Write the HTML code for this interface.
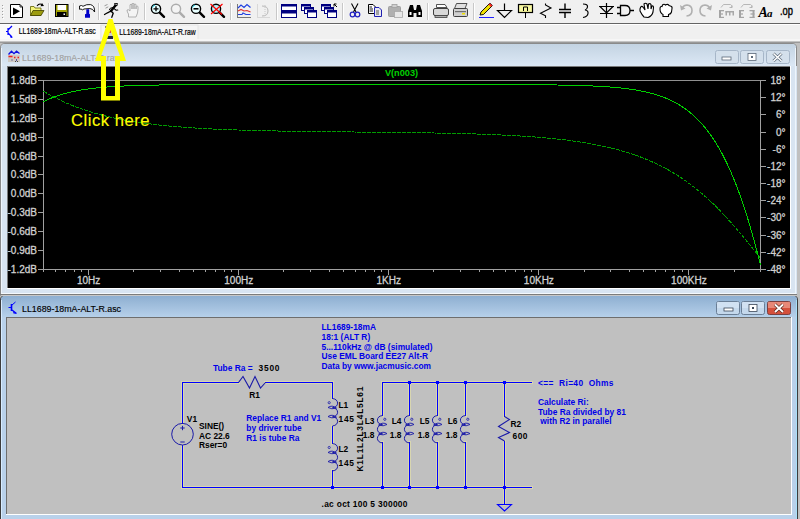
<!DOCTYPE html>
<html><head><meta charset="utf-8"><style>
html,body{margin:0;padding:0;background:#c0c0c0;}
#root{position:relative;width:800px;height:519px;overflow:hidden;background:#c0c0c0;font-family:"Liberation Sans", sans-serif;}
svg{position:absolute;left:0;top:0;}
</style></head><body><div id="root">
<svg width="800" height="519" viewBox="0 0 800 519" font-family='"Liberation Sans", sans-serif'>
<defs>
<linearGradient id="gInact" x1="0" y1="0" x2="0" y2="1">
<stop offset="0" stop-color="#c3d3e2"/><stop offset="1" stop-color="#dce8f5"/></linearGradient>
<linearGradient id="gAct" x1="0" y1="0" x2="0" y2="1">
<stop offset="0" stop-color="#8eafd1"/><stop offset="1" stop-color="#b6d0ea"/></linearGradient>
</defs>
<rect x="0" y="0" width="800" height="23" fill="#f0f0f0"/><rect x="0" y="23" width="800" height="1" fill="#646464"/><rect x="2" y="5" width="1" height="1" fill="#a0a0a0"/><rect x="3" y="6" width="1" height="1" fill="#ffffff"/><rect x="2" y="8" width="1" height="1" fill="#a0a0a0"/><rect x="3" y="9" width="1" height="1" fill="#ffffff"/><rect x="2" y="11" width="1" height="1" fill="#a0a0a0"/><rect x="3" y="12" width="1" height="1" fill="#ffffff"/><rect x="2" y="14" width="1" height="1" fill="#a0a0a0"/><rect x="3" y="15" width="1" height="1" fill="#ffffff"/><rect x="2" y="17" width="1" height="1" fill="#a0a0a0"/><rect x="3" y="18" width="1" height="1" fill="#ffffff"/><rect x="48" y="3" width="1" height="17" fill="#c8c8c8"/><rect x="49" y="3" width="1" height="17" fill="#ffffff"/><rect x="73" y="3" width="1" height="17" fill="#c8c8c8"/><rect x="74" y="3" width="1" height="17" fill="#ffffff"/><rect x="98" y="3" width="1" height="17" fill="#c8c8c8"/><rect x="99" y="3" width="1" height="17" fill="#ffffff"/><rect x="144" y="3" width="1" height="17" fill="#c8c8c8"/><rect x="145" y="3" width="1" height="17" fill="#ffffff"/><rect x="230" y="3" width="1" height="17" fill="#c8c8c8"/><rect x="231" y="3" width="1" height="17" fill="#ffffff"/><rect x="276" y="3" width="1" height="17" fill="#c8c8c8"/><rect x="277" y="3" width="1" height="17" fill="#ffffff"/><rect x="342" y="3" width="1" height="17" fill="#c8c8c8"/><rect x="343" y="3" width="1" height="17" fill="#ffffff"/><rect x="427" y="3" width="1" height="17" fill="#c8c8c8"/><rect x="428" y="3" width="1" height="17" fill="#ffffff"/><rect x="473" y="3" width="1" height="17" fill="#c8c8c8"/><rect x="474" y="3" width="1" height="17" fill="#ffffff"/><rect x="0" y="24" width="800" height="17" fill="#f0f0f0"/><rect x="0" y="24" width="800" height="1" fill="#ffffff"/><rect x="0" y="25" width="100" height="14" fill="#fafafa"/><rect x="101" y="25" width="97" height="15" fill="#f5f5f5" stroke="#e4e4e4" stroke-width="1"/><rect x="0" y="39" width="800" height="2" fill="#f6f6f6"/><rect x="0" y="41" width="800" height="1" fill="#c4c4c4"/><rect x="0" y="42" width="800" height="1" fill="#9a9a9a"/>
<path d="M0.5,295.5 L0.5,48 Q0.5,43.5 5,43.5 L792,43.5 Q796.5,43.5 796.5,48 L796.5,295.5 Z" fill="#d8e4f1" stroke="#8a8a8a" stroke-width="1"/><path d="M1,66 L1,48 Q1,44 5,44 L792,44 Q796,44 796,48 L796,66 Z" fill="url(#gInact)"/><rect x="1" y="66" width="796" height="229" fill="#d8e4f1"/><rect x="795" y="48" width="1" height="247" fill="#eef5fc"/><rect x="1" y="48" width="1" height="247" fill="#eef5fc"/><rect x="7" y="66" width="784" height="223" fill="#ffffff"/><rect x="7" y="66" width="783" height="222" fill="#7a7a7a"/><rect x="8" y="67" width="782" height="221" fill="#000000"/><rect x="1" y="293" width="795" height="1" fill="#f4f8fc"/><rect x="0" y="294" width="797" height="1" fill="#7c7c7c"/><rect x="8" y="55" width="12" height="7" fill="#cfcac4"/><polyline points="8.5,54.5 11.5,51.2 14,53.6 16.5,51.2 19.5,53.6" fill="none" stroke="#1010e0" stroke-width="1.3"/><path d="M8.5,56.5 L12.5,56.5 M14,57.5 L15.5,57.5 M17.5,57.5 L19,57.5" stroke="#f02020" stroke-width="1.3"/><rect x="11.5" y="59" width="1" height="2" fill="#7070a0"/><rect x="16" y="59" width="1" height="2" fill="#5050a0"/><rect x="15" y="61" width="1" height="1" fill="#404040"/><rect x="17" y="61" width="1" height="1" fill="#404040"/><text x="22" y="60.8" font-size="9.6" fill="#a0a0a0" stroke="#a0a0a0" stroke-width="0.15" textLength="99" lengthAdjust="spacingAndGlyphs">LL1689-18mA-ALT-R.raw</text><rect x="715.5" y="50.5" width="23" height="13" rx="2" fill="#d4e0ec" stroke="#a6b6c8" stroke-width="1"/><rect x="740.5" y="50.5" width="23" height="13" rx="2" fill="#d4e0ec" stroke="#a6b6c8" stroke-width="1"/><rect x="766.5" y="50.5" width="23" height="13" rx="2" fill="#d4e0ec" stroke="#a6b6c8" stroke-width="1"/><rect x="722" y="57" width="9" height="3" fill="#fff" stroke="#5a6878" stroke-width="0.8"/><rect x="748" y="53.5" width="8" height="7" fill="#fff" stroke="#5a6878" stroke-width="0.8"/><rect x="751" y="56" width="2" height="2" fill="#5a6878"/><path d="M773.5,53.5 L781.5,61 M781.5,53.5 L773.5,61" stroke="#5a6878" stroke-width="3"/><path d="M773.5,53.5 L781.5,61 M781.5,53.5 L773.5,61" stroke="#fff" stroke-width="1.6"/><rect x="38" y="80" width="728" height="1" fill="#909090"/><rect x="38" y="269" width="728" height="1" fill="#a0a0a0"/><rect x="43" y="80" width="1" height="190" fill="#a0a0a0"/><rect x="760" y="80" width="1" height="190" fill="#a0a0a0"/><rect x="38" y="80" width="5" height="1" fill="#a0a0a0"/><text x="37" y="83.5" font-size="10" fill="#d0d0d0" stroke="#d0d0d0" stroke-width="0.3" text-anchor="end">1.8dB</text><rect x="38" y="99" width="5" height="1" fill="#a0a0a0"/><text x="37" y="102.5" font-size="10" fill="#d0d0d0" stroke="#d0d0d0" stroke-width="0.3" text-anchor="end">1.5dB</text><rect x="38" y="118" width="5" height="1" fill="#a0a0a0"/><text x="37" y="121.5" font-size="10" fill="#d0d0d0" stroke="#d0d0d0" stroke-width="0.3" text-anchor="end">1.2dB</text><rect x="38" y="137" width="5" height="1" fill="#a0a0a0"/><text x="37" y="140.5" font-size="10" fill="#d0d0d0" stroke="#d0d0d0" stroke-width="0.3" text-anchor="end">0.9dB</text><rect x="38" y="156" width="5" height="1" fill="#a0a0a0"/><text x="37" y="159.5" font-size="10" fill="#d0d0d0" stroke="#d0d0d0" stroke-width="0.3" text-anchor="end">0.6dB</text><rect x="38" y="174" width="5" height="1" fill="#a0a0a0"/><text x="37" y="177.5" font-size="10" fill="#d0d0d0" stroke="#d0d0d0" stroke-width="0.3" text-anchor="end">0.3dB</text><rect x="38" y="193" width="5" height="1" fill="#a0a0a0"/><text x="37" y="196.5" font-size="10" fill="#d0d0d0" stroke="#d0d0d0" stroke-width="0.3" text-anchor="end">0.0dB</text><rect x="38" y="212" width="5" height="1" fill="#a0a0a0"/><text x="37" y="215.5" font-size="10" fill="#d0d0d0" stroke="#d0d0d0" stroke-width="0.3" text-anchor="end">-0.3dB</text><rect x="38" y="231" width="5" height="1" fill="#a0a0a0"/><text x="37" y="234.5" font-size="10" fill="#d0d0d0" stroke="#d0d0d0" stroke-width="0.3" text-anchor="end">-0.6dB</text><rect x="38" y="250" width="5" height="1" fill="#a0a0a0"/><text x="37" y="253.5" font-size="10" fill="#d0d0d0" stroke="#d0d0d0" stroke-width="0.3" text-anchor="end">-0.9dB</text><rect x="38" y="269" width="5" height="1" fill="#a0a0a0"/><text x="37" y="272.5" font-size="10" fill="#d0d0d0" stroke="#d0d0d0" stroke-width="0.3" text-anchor="end">-1.2dB</text><rect x="761" y="80" width="5" height="1" fill="#a0a0a0"/><text x="785.5" y="83.5" font-size="10" fill="#d0d0d0" stroke="#d0d0d0" stroke-width="0.3" text-anchor="end">18°</text><rect x="761" y="97" width="5" height="1" fill="#a0a0a0"/><text x="785.5" y="100.5" font-size="10" fill="#d0d0d0" stroke="#d0d0d0" stroke-width="0.3" text-anchor="end">12°</text><rect x="761" y="114" width="5" height="1" fill="#a0a0a0"/><text x="785.5" y="117.5" font-size="10" fill="#d0d0d0" stroke="#d0d0d0" stroke-width="0.3" text-anchor="end">6°</text><rect x="761" y="132" width="5" height="1" fill="#a0a0a0"/><text x="785.5" y="135.5" font-size="10" fill="#d0d0d0" stroke="#d0d0d0" stroke-width="0.3" text-anchor="end">0°</text><rect x="761" y="149" width="5" height="1" fill="#a0a0a0"/><text x="785.5" y="152.5" font-size="10" fill="#d0d0d0" stroke="#d0d0d0" stroke-width="0.3" text-anchor="end">-6°</text><rect x="761" y="166" width="5" height="1" fill="#a0a0a0"/><text x="785.5" y="169.5" font-size="10" fill="#d0d0d0" stroke="#d0d0d0" stroke-width="0.3" text-anchor="end">-12°</text><rect x="761" y="183" width="5" height="1" fill="#a0a0a0"/><text x="785.5" y="186.5" font-size="10" fill="#d0d0d0" stroke="#d0d0d0" stroke-width="0.3" text-anchor="end">-18°</text><rect x="761" y="200" width="5" height="1" fill="#a0a0a0"/><text x="785.5" y="203.5" font-size="10" fill="#d0d0d0" stroke="#d0d0d0" stroke-width="0.3" text-anchor="end">-24°</text><rect x="761" y="217" width="5" height="1" fill="#a0a0a0"/><text x="785.5" y="220.5" font-size="10" fill="#d0d0d0" stroke="#d0d0d0" stroke-width="0.3" text-anchor="end">-30°</text><rect x="761" y="235" width="5" height="1" fill="#a0a0a0"/><text x="785.5" y="238.5" font-size="10" fill="#d0d0d0" stroke="#d0d0d0" stroke-width="0.3" text-anchor="end">-36°</text><rect x="761" y="252" width="5" height="1" fill="#a0a0a0"/><text x="785.5" y="255.5" font-size="10" fill="#d0d0d0" stroke="#d0d0d0" stroke-width="0.3" text-anchor="end">-42°</text><rect x="761" y="269" width="5" height="1" fill="#a0a0a0"/><text x="785.5" y="272.5" font-size="10" fill="#d0d0d0" stroke="#d0d0d0" stroke-width="0.3" text-anchor="end">-48°</text><rect x="43" y="270" width="1" height="2" fill="#a0a0a0"/><rect x="55" y="270" width="1" height="2" fill="#a0a0a0"/><rect x="65" y="270" width="1" height="2" fill="#a0a0a0"/><rect x="74" y="270" width="1" height="2" fill="#a0a0a0"/><rect x="81" y="270" width="1" height="2" fill="#a0a0a0"/><rect x="88" y="270" width="1" height="5" fill="#a0a0a0"/><rect x="133" y="270" width="1" height="2" fill="#a0a0a0"/><rect x="160" y="270" width="1" height="2" fill="#a0a0a0"/><rect x="179" y="270" width="1" height="2" fill="#a0a0a0"/><rect x="193" y="270" width="1" height="2" fill="#a0a0a0"/><rect x="205" y="270" width="1" height="2" fill="#a0a0a0"/><rect x="215" y="270" width="1" height="2" fill="#a0a0a0"/><rect x="224" y="270" width="1" height="2" fill="#a0a0a0"/><rect x="231" y="270" width="1" height="2" fill="#a0a0a0"/><rect x="238" y="270" width="1" height="5" fill="#a0a0a0"/><rect x="283" y="270" width="1" height="2" fill="#a0a0a0"/><rect x="310" y="270" width="1" height="2" fill="#a0a0a0"/><rect x="329" y="270" width="1" height="2" fill="#a0a0a0"/><rect x="343" y="270" width="1" height="2" fill="#a0a0a0"/><rect x="355" y="270" width="1" height="2" fill="#a0a0a0"/><rect x="365" y="270" width="1" height="2" fill="#a0a0a0"/><rect x="374" y="270" width="1" height="2" fill="#a0a0a0"/><rect x="381" y="270" width="1" height="2" fill="#a0a0a0"/><rect x="388" y="270" width="1" height="5" fill="#a0a0a0"/><rect x="433" y="270" width="1" height="2" fill="#a0a0a0"/><rect x="460" y="270" width="1" height="2" fill="#a0a0a0"/><rect x="479" y="270" width="1" height="2" fill="#a0a0a0"/><rect x="493" y="270" width="1" height="2" fill="#a0a0a0"/><rect x="505" y="270" width="1" height="2" fill="#a0a0a0"/><rect x="515" y="270" width="1" height="2" fill="#a0a0a0"/><rect x="524" y="270" width="1" height="2" fill="#a0a0a0"/><rect x="531" y="270" width="1" height="2" fill="#a0a0a0"/><rect x="538" y="270" width="1" height="5" fill="#a0a0a0"/><rect x="584" y="270" width="1" height="2" fill="#a0a0a0"/><rect x="610" y="270" width="1" height="2" fill="#a0a0a0"/><rect x="629" y="270" width="1" height="2" fill="#a0a0a0"/><rect x="643" y="270" width="1" height="2" fill="#a0a0a0"/><rect x="655" y="270" width="1" height="2" fill="#a0a0a0"/><rect x="665" y="270" width="1" height="2" fill="#a0a0a0"/><rect x="674" y="270" width="1" height="2" fill="#a0a0a0"/><rect x="682" y="270" width="1" height="2" fill="#a0a0a0"/><rect x="688" y="270" width="1" height="5" fill="#a0a0a0"/><rect x="734" y="270" width="1" height="2" fill="#a0a0a0"/><rect x="760" y="270" width="1" height="2" fill="#a0a0a0"/><text x="88.67256114933701" y="284.4" font-size="10" fill="#d0d0d0" stroke="#d0d0d0" stroke-width="0.3" text-anchor="middle">10Hz</text><text x="238.73256114933702" y="284.4" font-size="10" fill="#d0d0d0" stroke="#d0d0d0" stroke-width="0.3" text-anchor="middle">100Hz</text><text x="388.792561149337" y="284.4" font-size="10" fill="#d0d0d0" stroke="#d0d0d0" stroke-width="0.3" text-anchor="middle">1KHz</text><text x="538.852561149337" y="284.4" font-size="10" fill="#d0d0d0" stroke="#d0d0d0" stroke-width="0.3" text-anchor="middle">10KHz</text><text x="688.9125611493371" y="284.4" font-size="10" fill="#d0d0d0" stroke="#d0d0d0" stroke-width="0.3" text-anchor="middle">100KHz</text><text x="401.5" y="75.8" font-size="9.2" font-weight="bold" fill="#00d000" text-anchor="middle">V(n003)</text><polyline points="43.50,91.24 44.69,91.95 45.89,92.65 47.08,93.34 48.28,94.02 49.47,94.68 50.67,95.34 51.86,95.99 53.06,96.62 54.25,97.24 55.45,97.86 56.64,98.46 57.84,99.06 59.03,99.64 60.23,100.21 61.42,100.78 62.62,101.33 63.81,101.88 65.01,102.42 66.20,102.94 67.40,103.46 68.59,103.97 69.79,104.47 70.98,104.96 72.18,105.45 73.37,105.92 74.57,106.39 75.76,106.85 76.96,107.30 78.15,107.74 79.35,108.18 80.54,108.61 81.74,109.03 82.93,109.44 84.13,109.84 85.32,110.24 86.52,110.64 87.71,111.02 88.91,111.40 90.10,111.77 91.30,112.13 92.49,112.49 93.69,112.85 94.88,113.19 96.08,113.53 97.27,113.86 98.47,114.19 99.66,114.51 100.86,114.83 102.05,115.14 103.25,115.45 104.44,115.75 105.64,116.04 106.83,116.33 108.03,116.61 109.22,116.89 110.42,117.17 111.61,117.44 112.81,117.70 114.00,117.96 115.20,118.22 116.39,118.47 117.59,118.71 118.78,118.95 119.98,119.19 121.17,119.42 122.37,119.65 123.56,119.88 124.76,120.10 125.95,120.31 127.15,120.53 128.34,120.74 129.54,120.94 130.73,121.14 131.93,121.34 133.12,121.54 134.32,121.73 135.51,121.91 136.71,122.10 137.90,122.28 139.10,122.46 140.29,122.63 141.49,122.80 142.68,122.97 143.88,123.13 145.07,123.30 146.27,123.46 147.46,123.61 148.66,123.76 149.85,123.92 151.05,124.06 152.24,124.21 153.44,124.35 154.63,124.49 155.83,124.63 157.02,124.76 158.22,124.90 159.41,125.03 160.61,125.16 161.80,125.28 163.00,125.40 164.19,125.53 165.39,125.64 166.58,125.76 167.78,125.88 168.97,125.99 170.17,126.10 171.36,126.21 172.56,126.31 173.75,126.42 174.95,126.52 176.14,126.62 177.34,126.72 178.53,126.82 179.73,126.92 180.92,127.01 182.12,127.10 183.31,127.19 184.51,127.28 185.70,127.37 186.90,127.45 188.09,127.54 189.29,127.62 190.48,127.70 191.68,127.78 192.87,127.86 194.07,127.94 195.26,128.01 196.46,128.09 197.65,128.16 198.85,128.23 200.04,128.30 201.24,128.37 202.43,128.44 203.63,128.51 204.82,128.57 206.02,128.63 207.21,128.70 208.41,128.76 209.60,128.82 210.80,128.88 211.99,128.94 213.19,129.00 214.38,129.05 215.58,129.11 216.77,129.16 217.97,129.22 219.16,129.27 220.36,129.32 221.55,129.37 222.75,129.42 223.94,129.47 225.14,129.52 226.33,129.57 227.53,129.61 228.72,129.66 229.92,129.71 231.11,129.75 232.31,129.79 233.50,129.84 234.70,129.88 235.89,129.92 237.09,129.96 238.28,130.00 239.48,130.04 240.67,130.08 241.87,130.11 243.06,130.15 244.26,130.19 245.45,130.22 246.65,130.26 247.84,130.29 249.04,130.33 250.23,130.36 251.43,130.39 252.62,130.43 253.82,130.46 255.01,130.49 256.21,130.52 257.40,130.55 258.60,130.58 259.79,130.61 260.99,130.64 262.18,130.67 263.38,130.69 264.57,130.72 265.77,130.75 266.96,130.78 268.16,130.80 269.35,130.83 270.55,130.85 271.74,130.88 272.94,130.90 274.13,130.93 275.33,130.95 276.52,130.97 277.72,131.00 278.91,131.02 280.11,131.04 281.30,131.06 282.50,131.08 283.69,131.11 284.89,131.13 286.08,131.15 287.28,131.17 288.47,131.19 289.67,131.21 290.86,131.23 292.06,131.25 293.25,131.26 294.45,131.28 295.64,131.30 296.84,131.32 298.03,131.34 299.23,131.36 300.42,131.37 301.62,131.39 302.81,131.41 304.01,131.42 305.20,131.44 306.40,131.46 307.59,131.47 308.79,131.49 309.98,131.50 311.18,131.52 312.37,131.54 313.56,131.55 314.76,131.57 315.95,131.58 317.15,131.60 318.34,131.61 319.54,131.62 320.73,131.64 321.93,131.65 323.12,131.67 324.32,131.68 325.51,131.70 326.71,131.71 327.90,131.72 329.10,131.74 330.29,131.75 331.49,131.76 332.68,131.78 333.88,131.79 335.07,131.80 336.27,131.81 337.46,131.83 338.66,131.84 339.85,131.85 341.05,131.87 342.24,131.88 343.44,131.89 344.63,131.90 345.83,131.92 347.02,131.93 348.22,131.94 349.41,131.95 350.61,131.97 351.80,131.98 353.00,131.99 354.19,132.00 355.39,132.01 356.58,132.03 357.78,132.04 358.97,132.05 360.17,132.06 361.36,132.07 362.56,132.09 363.75,132.10 364.95,132.11 366.14,132.12 367.34,132.14 368.53,132.15 369.73,132.16 370.92,132.17 372.12,132.19 373.31,132.20 374.51,132.21 375.70,132.22 376.90,132.24 378.09,132.25 379.29,132.26 380.48,132.27 381.68,132.29 382.87,132.30 384.07,132.31 385.26,132.33 386.46,132.34 387.65,132.35 388.85,132.37 390.04,132.38 391.24,132.39 392.43,132.41 393.63,132.42 394.82,132.44 396.02,132.45 397.21,132.46 398.41,132.48 399.60,132.49 400.80,132.51 401.99,132.52 403.19,132.54 404.38,132.55 405.58,132.57 406.77,132.58 407.97,132.60 409.16,132.62 410.36,132.63 411.55,132.65 412.75,132.66 413.94,132.68 415.14,132.70 416.33,132.72 417.53,132.73 418.72,132.75 419.92,132.77 421.11,132.79 422.31,132.81 423.50,132.82 424.70,132.84 425.89,132.86 427.09,132.88 428.28,132.90 429.48,132.92 430.67,132.94 431.87,132.96 433.06,132.98 434.26,133.00 435.45,133.03 436.65,133.05 437.84,133.07 439.04,133.09 440.23,133.12 441.43,133.14 442.62,133.16 443.82,133.19 445.01,133.21 446.21,133.24 447.40,133.26 448.60,133.29 449.79,133.31 450.99,133.34 452.18,133.37 453.38,133.39 454.57,133.42 455.77,133.45 456.96,133.48 458.16,133.51 459.35,133.54 460.55,133.57 461.74,133.60 462.94,133.63 464.13,133.66 465.33,133.69 466.52,133.73 467.72,133.76 468.91,133.79 470.11,133.83 471.30,133.86 472.50,133.90 473.69,133.94 474.89,133.97 476.08,134.01 477.28,134.05 478.47,134.09 479.67,134.13 480.86,134.17 482.06,134.21 483.25,134.25 484.45,134.29 485.64,134.34 486.84,134.38 488.03,134.43 489.23,134.47 490.42,134.52 491.62,134.57 492.81,134.61 494.01,134.66 495.20,134.71 496.40,134.76 497.59,134.82 498.79,134.87 499.98,134.92 501.18,134.98 502.37,135.03 503.57,135.09 504.76,135.15 505.96,135.20 507.15,135.26 508.35,135.33 509.54,135.39 510.74,135.45 511.93,135.51 513.13,135.58 514.32,135.65 515.52,135.71 516.71,135.78 517.91,135.85 519.10,135.92 520.30,136.00 521.49,136.07 522.69,136.15 523.88,136.22 525.08,136.30 526.27,136.38 527.47,136.46 528.66,136.55 529.86,136.63 531.05,136.72 532.25,136.80 533.44,136.89 534.64,136.98 535.83,137.07 537.03,137.17 538.22,137.26 539.42,137.36 540.61,137.46 541.81,137.56 543.00,137.66 544.20,137.77 545.39,137.87 546.59,137.98 547.78,138.09 548.98,138.21 550.17,138.32 551.37,138.44 552.56,138.56 553.76,138.68 554.95,138.80 556.15,138.93 557.34,139.05 558.54,139.18 559.73,139.32 560.93,139.45 562.12,139.59 563.32,139.73 564.51,139.87 565.71,140.02 566.90,140.16 568.10,140.31 569.29,140.47 570.49,140.62 571.68,140.78 572.88,140.94 574.07,141.11 575.27,141.28 576.46,141.45 577.66,141.62 578.85,141.80 580.05,141.98 581.24,142.16 582.43,142.35 583.63,142.54 584.82,142.74 586.02,142.93 587.21,143.13 588.41,143.34 589.60,143.55 590.80,143.76 591.99,143.98 593.19,144.20 594.38,144.42 595.58,144.65 596.77,144.88 597.97,145.12 599.16,145.36 600.36,145.61 601.55,145.86 602.75,146.11 603.94,146.37 605.14,146.63 606.33,146.90 607.53,147.18 608.72,147.46 609.92,147.74 611.11,148.03 612.31,148.32 613.50,148.62 614.70,148.93 615.89,149.24 617.09,149.55 618.28,149.87 619.48,150.20 620.67,150.54 621.87,150.87 623.06,151.22 624.26,151.57 625.45,151.93 626.65,152.29 627.84,152.67 629.04,153.04 630.23,153.43 631.43,153.82 632.62,154.22 633.82,154.62 635.01,155.04 636.21,155.46 637.40,155.88 638.60,156.32 639.79,156.76 640.99,157.21 642.18,157.67 643.38,158.14 644.57,158.61 645.77,159.09 646.96,159.58 648.16,160.08 649.35,160.59 650.55,161.11 651.74,161.64 652.94,162.17 654.13,162.72 655.33,163.27 656.52,163.84 657.72,164.41 658.91,164.99 660.11,165.59 661.30,166.19 662.50,166.80 663.69,167.43 664.89,168.06 666.08,168.70 667.28,169.36 668.47,170.03 669.67,170.70 670.86,171.39 672.06,172.09 673.25,172.80 674.45,173.53 675.64,174.26 676.84,175.01 678.03,175.77 679.23,176.54 680.42,177.32 681.62,178.11 682.81,178.92 684.01,179.74 685.20,180.57 686.40,181.42 687.59,182.28 688.79,183.15 689.98,184.03 691.18,184.93 692.37,185.84 693.57,186.76 694.76,187.70 695.96,188.65 697.15,189.62 698.35,190.60 699.54,191.59 700.74,192.59 701.93,193.61 703.13,194.64 704.32,195.69 705.52,196.75 706.71,197.83 707.91,198.91 709.10,200.02 710.30,201.13 711.49,202.26 712.69,203.40 713.88,204.56 715.08,205.73 716.27,206.91 717.47,208.11 718.66,209.32 719.86,210.54 721.05,211.78 722.25,213.03 723.44,214.29 724.64,215.56 725.83,216.85 727.03,218.15 728.22,219.46 729.42,220.78 730.61,222.11 731.81,223.46 733.00,224.81 734.20,226.18 735.39,227.56 736.59,228.94 737.78,230.34 738.98,231.75 740.17,233.16 741.37,234.58 742.56,236.01 743.76,237.45 744.95,238.90 746.15,240.35 747.34,241.82 748.54,243.28 749.73,244.75 750.93,246.23 752.12,247.72 753.32,249.20 754.51,250.69 755.71,252.19 756.90,253.68 758.10,255.18 759.29,256.69 760.49,258.19" fill="none" stroke="#009c00" stroke-width="1" stroke-dasharray="4,1" shape-rendering="crispEdges"/><polyline points="43.50,101.61 44.69,101.01 45.89,100.43 47.08,99.87 48.28,99.33 49.47,98.81 50.67,98.31 51.86,97.83 53.06,97.36 54.25,96.90 55.45,96.47 56.64,96.05 57.84,95.64 59.03,95.25 60.23,94.87 61.42,94.50 62.62,94.15 63.81,93.80 65.01,93.47 66.20,93.16 67.40,92.85 68.59,92.55 69.79,92.27 70.98,91.99 72.18,91.72 73.37,91.47 74.57,91.22 75.76,90.98 76.96,90.75 78.15,90.53 79.35,90.31 80.54,90.11 81.74,89.91 82.93,89.71 84.13,89.53 85.32,89.35 86.52,89.17 87.71,89.01 88.91,88.85 90.10,88.69 91.30,88.54 92.49,88.40 93.69,88.26 94.88,88.12 96.08,87.99 97.27,87.87 98.47,87.75 99.66,87.63 100.86,87.52 102.05,87.41 103.25,87.31 104.44,87.21 105.64,87.11 106.83,87.02 108.03,86.93 109.22,86.84 110.42,86.76 111.61,86.67 112.81,86.60 114.00,86.52 115.20,86.45 116.39,86.38 117.59,86.31 118.78,86.25 119.98,86.18 121.17,86.12 122.37,86.07 123.56,86.01 124.76,85.95 125.95,85.90 127.15,85.85 128.34,85.80 129.54,85.76 130.73,85.71 131.93,85.67 133.12,85.63 134.32,85.59 135.51,85.55 136.71,85.51 137.90,85.47 139.10,85.44 140.29,85.40 141.49,85.37 142.68,85.34 143.88,85.31 145.07,85.28 146.27,85.25 147.46,85.23 148.66,85.20 149.85,85.17 151.05,85.15 152.24,85.13 153.44,85.10 154.63,85.08 155.83,85.06 157.02,85.04 158.22,85.02 159.41,85.00 160.61,84.99 161.80,84.97 163.00,84.95 164.19,84.93 165.39,84.92 166.58,84.90 167.78,84.89 168.97,84.88 170.17,84.86 171.36,84.85 172.56,84.84 173.75,84.82 174.95,84.81 176.14,84.80 177.34,84.79 178.53,84.78 179.73,84.77 180.92,84.76 182.12,84.75 183.31,84.74 184.51,84.73 185.70,84.73 186.90,84.72 188.09,84.71 189.29,84.70 190.48,84.69 191.68,84.69 192.87,84.68 194.07,84.67 195.26,84.67 196.46,84.66 197.65,84.66 198.85,84.65 200.04,84.65 201.24,84.64 202.43,84.63 203.63,84.63 204.82,84.63 206.02,84.62 207.21,84.62 208.41,84.61 209.60,84.61 210.80,84.60 211.99,84.60 213.19,84.60 214.38,84.59 215.58,84.59 216.77,84.59 217.97,84.58 219.16,84.58 220.36,84.58 221.55,84.58 222.75,84.57 223.94,84.57 225.14,84.57 226.33,84.57 227.53,84.56 228.72,84.56 229.92,84.56 231.11,84.56 232.31,84.55 233.50,84.55 234.70,84.55 235.89,84.55 237.09,84.55 238.28,84.55 239.48,84.54 240.67,84.54 241.87,84.54 243.06,84.54 244.26,84.54 245.45,84.54 246.65,84.54 247.84,84.53 249.04,84.53 250.23,84.53 251.43,84.53 252.62,84.53 253.82,84.53 255.01,84.53 256.21,84.53 257.40,84.53 258.60,84.52 259.79,84.52 260.99,84.52 262.18,84.52 263.38,84.52 264.57,84.52 265.77,84.52 266.96,84.52 268.16,84.52 269.35,84.52 270.55,84.52 271.74,84.52 272.94,84.52 274.13,84.52 275.33,84.51 276.52,84.51 277.72,84.51 278.91,84.51 280.11,84.51 281.30,84.51 282.50,84.51 283.69,84.51 284.89,84.51 286.08,84.51 287.28,84.51 288.47,84.51 289.67,84.51 290.86,84.51 292.06,84.51 293.25,84.51 294.45,84.51 295.64,84.51 296.84,84.51 298.03,84.51 299.23,84.51 300.42,84.51 301.62,84.51 302.81,84.51 304.01,84.51 305.20,84.51 306.40,84.51 307.59,84.51 308.79,84.51 309.98,84.51 311.18,84.51 312.37,84.51 313.56,84.51 314.76,84.51 315.95,84.50 317.15,84.50 318.34,84.50 319.54,84.50 320.73,84.50 321.93,84.50 323.12,84.50 324.32,84.50 325.51,84.50 326.71,84.50 327.90,84.50 329.10,84.50 330.29,84.50 331.49,84.50 332.68,84.50 333.88,84.50 335.07,84.50 336.27,84.50 337.46,84.50 338.66,84.50 339.85,84.50 341.05,84.50 342.24,84.50 343.44,84.50 344.63,84.50 345.83,84.50 347.02,84.50 348.22,84.50 349.41,84.50 350.61,84.50 351.80,84.50 353.00,84.50 354.19,84.50 355.39,84.50 356.58,84.50 357.78,84.50 358.97,84.50 360.17,84.50 361.36,84.50 362.56,84.50 363.75,84.50 364.95,84.50 366.14,84.50 367.34,84.50 368.53,84.50 369.73,84.50 370.92,84.50 372.12,84.50 373.31,84.50 374.51,84.50 375.70,84.50 376.90,84.50 378.09,84.50 379.29,84.50 380.48,84.50 381.68,84.50 382.87,84.50 384.07,84.50 385.26,84.50 386.46,84.50 387.65,84.50 388.85,84.50 390.04,84.50 391.24,84.50 392.43,84.50 393.63,84.50 394.82,84.50 396.02,84.50 397.21,84.50 398.41,84.50 399.60,84.50 400.80,84.50 401.99,84.51 403.19,84.51 404.38,84.51 405.58,84.51 406.77,84.51 407.97,84.51 409.16,84.51 410.36,84.51 411.55,84.51 412.75,84.51 413.94,84.51 415.14,84.51 416.33,84.51 417.53,84.51 418.72,84.51 419.92,84.51 421.11,84.51 422.31,84.51 423.50,84.51 424.70,84.51 425.89,84.51 427.09,84.51 428.28,84.51 429.48,84.51 430.67,84.51 431.87,84.51 433.06,84.51 434.26,84.51 435.45,84.51 436.65,84.51 437.84,84.51 439.04,84.51 440.23,84.51 441.43,84.51 442.62,84.52 443.82,84.52 445.01,84.52 446.21,84.52 447.40,84.52 448.60,84.52 449.79,84.52 450.99,84.52 452.18,84.52 453.38,84.52 454.57,84.52 455.77,84.52 456.96,84.52 458.16,84.52 459.35,84.53 460.55,84.53 461.74,84.53 462.94,84.53 464.13,84.53 465.33,84.53 466.52,84.53 467.72,84.53 468.91,84.53 470.11,84.54 471.30,84.54 472.50,84.54 473.69,84.54 474.89,84.54 476.08,84.54 477.28,84.54 478.47,84.55 479.67,84.55 480.86,84.55 482.06,84.55 483.25,84.55 484.45,84.55 485.64,84.56 486.84,84.56 488.03,84.56 489.23,84.56 490.42,84.56 491.62,84.57 492.81,84.57 494.01,84.57 495.20,84.58 496.40,84.58 497.59,84.58 498.79,84.58 499.98,84.59 501.18,84.59 502.37,84.59 503.57,84.60 504.76,84.60 505.96,84.60 507.15,84.61 508.35,84.61 509.54,84.62 510.74,84.62 511.93,84.63 513.13,84.63 514.32,84.63 515.52,84.64 516.71,84.64 517.91,84.65 519.10,84.66 520.30,84.66 521.49,84.67 522.69,84.67 523.88,84.68 525.08,84.69 526.27,84.69 527.47,84.70 528.66,84.71 529.86,84.72 531.05,84.72 532.25,84.73 533.44,84.74 534.64,84.75 535.83,84.76 537.03,84.77 538.22,84.78 539.42,84.79 540.61,84.80 541.81,84.81 543.00,84.82 544.20,84.84 545.39,84.85 546.59,84.86 547.78,84.87 548.98,84.89 550.17,84.90 551.37,84.92 552.56,84.93 553.76,84.95 554.95,84.97 556.15,84.98 557.34,85.00 558.54,85.02 559.73,85.04 560.93,85.06 562.12,85.08 563.32,85.10 564.51,85.13 565.71,85.15 566.90,85.17 568.10,85.20 569.29,85.22 570.49,85.25 571.68,85.28 572.88,85.31 574.07,85.34 575.27,85.37 576.46,85.40 577.66,85.44 578.85,85.47 580.05,85.51 581.24,85.54 582.43,85.58 583.63,85.62 584.82,85.67 586.02,85.71 587.21,85.75 588.41,85.80 589.60,85.85 590.80,85.90 591.99,85.95 593.19,86.01 594.38,86.06 595.58,86.12 596.77,86.18 597.97,86.24 599.16,86.31 600.36,86.37 601.55,86.44 602.75,86.52 603.94,86.59 605.14,86.67 606.33,86.75 607.53,86.83 608.72,86.92 609.92,87.01 611.11,87.10 612.31,87.20 613.50,87.30 614.70,87.40 615.89,87.51 617.09,87.62 618.28,87.74 619.48,87.86 620.67,87.99 621.87,88.11 623.06,88.25 624.26,88.39 625.45,88.53 626.65,88.68 627.84,88.84 629.04,89.00 630.23,89.16 631.43,89.34 632.62,89.51 633.82,89.70 635.01,89.89 636.21,90.09 637.40,90.30 638.60,90.51 639.79,90.73 640.99,90.96 642.18,91.20 643.38,91.45 644.57,91.71 645.77,91.97 646.96,92.25 648.16,92.53 649.35,92.83 650.55,93.13 651.74,93.45 652.94,93.78 654.13,94.12 655.33,94.47 656.52,94.84 657.72,95.22 658.91,95.61 660.11,96.02 661.30,96.44 662.50,96.87 663.69,97.33 664.89,97.79 666.08,98.28 667.28,98.78 668.47,99.30 669.67,99.84 670.86,100.39 672.06,100.97 673.25,101.56 674.45,102.18 675.64,102.82 676.84,103.48 678.03,104.17 679.23,104.87 680.42,105.61 681.62,106.36 682.81,107.15 684.01,107.96 685.20,108.80 686.40,109.66 687.59,110.56 688.79,111.49 689.98,112.45 691.18,113.44 692.37,114.46 693.57,115.52 694.76,116.61 695.96,117.74 697.15,118.91 698.35,120.11 699.54,121.36 700.74,122.64 701.93,123.97 703.13,125.34 704.32,126.75 705.52,128.21 706.71,129.71 707.91,131.27 709.10,132.87 710.30,134.52 711.49,136.22 712.69,137.97 713.88,139.78 715.08,141.65 716.27,143.57 717.47,145.54 718.66,147.58 719.86,149.68 721.05,151.83 722.25,154.05 723.44,156.34 724.64,158.69 725.83,161.10 727.03,163.59 728.22,166.14 729.42,168.77 730.61,171.46 731.81,174.23 733.00,177.07 734.20,179.99 735.39,182.99 736.59,186.06 737.78,189.21 738.98,192.44 740.17,195.75 741.37,199.15 742.56,202.62 743.76,206.18 744.95,209.83 746.15,213.56 747.34,217.37 748.54,221.28 749.73,225.27 750.93,229.35 752.12,233.52 753.32,237.78 754.51,242.12 755.71,246.56 756.90,251.09 758.10,255.72 759.29,260.43 760.49,265.23" fill="none" stroke="#00d000" stroke-width="1" shape-rendering="crispEdges"/>
<path d="M0.5,530 L0.5,300 Q0.5,295.5 5,295.5 L793,295.5 Q797.5,295.5 797.5,300 L797.5,530 Z" fill="#b9d1ea" stroke="#3c3c3c" stroke-width="1"/><path d="M1,317 L1,300 Q1,296 5,296 L793,296 Q797,296 797,300 L797,317 Z" fill="url(#gAct)"/><rect x="1" y="317" width="796" height="210" fill="#b9d1ea"/><rect x="1" y="300" width="1" height="230" fill="#d8ecff"/><rect x="796" y="300" width="1" height="230" fill="#a8e0f8"/><rect x="1" y="295" width="796" height="1" fill="#c8c8c8"/><rect x="6" y="317" width="786" height="198" fill="#ffffff"/><rect x="6" y="317" width="785" height="197" fill="#6e6e6e"/><rect x="7" y="318" width="784" height="196" fill="#c0c0c0"/><g stroke="#0000ff" fill="none"><path d="M8.5,307.5 L11.5,307.5" stroke-width="1"/><path d="M11.5,304 L11.5,311" stroke-width="1.6"/><path d="M12,305 L15.5,302" stroke-width="1"/><path d="M12,310 L16.5,313.5" stroke-width="1.3"/></g><path d="M13,311 L16.5,313.8 L13.5,313.6 Z" fill="#0000ff"/><text x="22" y="312" font-size="9.6" fill="#000" stroke="#000" stroke-width="0.15" textLength="99" lengthAdjust="spacingAndGlyphs">LL1689-18mA-ALT-R.asc</text><rect x="716.5" y="301.5" width="23" height="13" rx="2" fill="#c4d8ec" stroke="#6a7e96" stroke-width="1"/><rect x="741.5" y="301.5" width="23" height="13" rx="2" fill="#c4d8ec" stroke="#6a7e96" stroke-width="1"/><rect x="767.5" y="301.5" width="23" height="13" rx="2" fill="#d4503c" stroke="#7a4040" stroke-width="1"/><rect x="717" y="302" width="22" height="6" fill="#dae8f6" opacity="0.6"/><rect x="742" y="302" width="22" height="6" fill="#dae8f6" opacity="0.6"/><rect x="768" y="302" width="22" height="6" fill="#f0a090" opacity="0.7"/><rect x="724" y="308" width="9" height="3" fill="#fff" stroke="#3a4658" stroke-width="0.8"/><rect x="749" y="304.5" width="8" height="7" fill="#fff" stroke="#3a4658" stroke-width="0.8"/><rect x="752" y="307" width="2" height="2" fill="#3a4658"/><path d="M775,304.5 L783,312 M783,304.5 L775,312" stroke="#5a2a20" stroke-width="3.2"/><path d="M775,304.5 L783,312 M783,304.5 L775,312" stroke="#fff" stroke-width="1.8"/><rect x="181" y="381" width="59" height="3" fill="#d8d6b0"/><rect x="264" y="381" width="70" height="3" fill="#d8d6b0"/><rect x="381" y="381" width="152" height="3" fill="#d8d6b0"/><rect x="181" y="486" width="352" height="3" fill="#d8d6b0"/><rect x="181" y="381" width="3" height="44" fill="#d8d6b0"/><rect x="181" y="444" width="3" height="45" fill="#d8d6b0"/><rect x="331" y="381" width="3" height="19" fill="#d8d6b0"/><rect x="331" y="425" width="3" height="20" fill="#d8d6b0"/><rect x="331" y="469" width="3" height="20" fill="#d8d6b0"/><rect x="381" y="381" width="3" height="36" fill="#d8d6b0"/><rect x="381" y="441" width="3" height="48" fill="#d8d6b0"/><rect x="408" y="381" width="3" height="36" fill="#d8d6b0"/><rect x="408" y="441" width="3" height="48" fill="#d8d6b0"/><rect x="436" y="381" width="3" height="36" fill="#d8d6b0"/><rect x="436" y="441" width="3" height="48" fill="#d8d6b0"/><rect x="464" y="381" width="3" height="36" fill="#d8d6b0"/><rect x="464" y="441" width="3" height="48" fill="#d8d6b0"/><rect x="503" y="381" width="3" height="37" fill="#d8d6b0"/><rect x="503" y="440" width="3" height="66" fill="#d8d6b0"/><rect x="182" y="382" width="57" height="1" fill="#0000ff"/><rect x="265" y="382" width="68" height="1" fill="#0000ff"/><rect x="382" y="382" width="150" height="1" fill="#0000ff"/><rect x="182" y="487" width="350" height="1" fill="#0000ff"/><rect x="182" y="382" width="1" height="42" fill="#0000ff"/><rect x="182" y="445" width="1" height="43" fill="#0000ff"/><rect x="332" y="382" width="1" height="17" fill="#0000ff"/><rect x="332" y="426" width="1" height="18" fill="#0000ff"/><rect x="332" y="470" width="1" height="18" fill="#0000ff"/><rect x="382" y="382" width="1" height="34" fill="#0000ff"/><rect x="382" y="442" width="1" height="46" fill="#0000ff"/><rect x="409" y="382" width="1" height="34" fill="#0000ff"/><rect x="409" y="442" width="1" height="46" fill="#0000ff"/><rect x="437" y="382" width="1" height="34" fill="#0000ff"/><rect x="437" y="442" width="1" height="46" fill="#0000ff"/><rect x="465" y="382" width="1" height="34" fill="#0000ff"/><rect x="465" y="442" width="1" height="46" fill="#0000ff"/><rect x="504" y="382" width="1" height="35" fill="#0000ff"/><rect x="504" y="441" width="1" height="64" fill="#0000ff"/><rect x="331" y="486" width="3" height="3" fill="#0000ff"/><rect x="381" y="486" width="3" height="3" fill="#0000ff"/><rect x="408" y="381" width="3" height="3" fill="#0000ff"/><rect x="436" y="381" width="3" height="3" fill="#0000ff"/><rect x="464" y="381" width="3" height="3" fill="#0000ff"/><rect x="503" y="381" width="3" height="3" fill="#0000ff"/><rect x="408" y="486" width="3" height="3" fill="#0000ff"/><rect x="436" y="486" width="3" height="3" fill="#0000ff"/><rect x="464" y="486" width="3" height="3" fill="#0000ff"/><rect x="503" y="486" width="3" height="3" fill="#0000ff"/><polyline points="238.5,382.5 243,376.5 249.5,388 255,376.5 260.5,388 265.5,382.5" fill="none" stroke="#1a1aa8" stroke-width="1.1"/><polyline points="504.5,416.5 509.5,419.5 498.5,426.5 509.5,432.5 498.5,437.5 504.5,441" fill="none" stroke="#1a1aa8" stroke-width="1.1"/><circle cx="182.5" cy="434.2" r="10.8" fill="none" stroke="#1a1aa8" stroke-width="1"/><path d="M180.3,428 L184.7,428 M182.5,425.8 L182.5,430.2 M180.3,442 L184.7,442" stroke="#1a1aa8" stroke-width="1"/><path d="M497.5,504.5 L511.5,504.5 L504.5,511 Z" fill="none" stroke="#0000ff" stroke-width="1.1"/><path d="M332.5,398.6 C339.3,398.90000000000003 339.3,407.40000000000003 332.5,407.70000000000005 C339.3,408.00000000000006 339.3,416.50000000000006 332.5,416.80000000000007 C339.3,417.1 339.3,425.6 332.5,425.90000000000003 " fill="none" stroke="#1a1aa8" stroke-width="1"/><path d="M336.5,408.1 Q332.0,404.50000000000006 328.0,407.50000000000006 Q331.5,409.70000000000005 336.5,408.1" fill="none" stroke="#1a1aa8" stroke-width="0.9"/><path d="M336.5,417.2 Q332.0,413.6 328.0,416.6 Q331.5,418.8 336.5,417.2" fill="none" stroke="#1a1aa8" stroke-width="0.9"/><path d="M332.5,443.6 C339.3,443.90000000000003 339.3,452.40000000000003 332.5,452.70000000000005 C339.3,453.00000000000006 339.3,461.50000000000006 332.5,461.80000000000007 C339.3,462.1 339.3,470.6 332.5,470.90000000000003 " fill="none" stroke="#1a1aa8" stroke-width="1"/><path d="M336.5,453.1 Q332.0,449.50000000000006 328.0,452.50000000000006 Q331.5,454.70000000000005 336.5,453.1" fill="none" stroke="#1a1aa8" stroke-width="0.9"/><path d="M336.5,462.2 Q332.0,458.6 328.0,461.6 Q331.5,463.8 336.5,462.2" fill="none" stroke="#1a1aa8" stroke-width="0.9"/><path d="M382.5,415.6 C375.7,415.90000000000003 375.7,424.40000000000003 382.5,424.70000000000005 C375.7,425.00000000000006 375.7,433.50000000000006 382.5,433.80000000000007 C375.7,434.1 375.7,442.6 382.5,442.90000000000003 " fill="none" stroke="#1a1aa8" stroke-width="1"/><path d="M378.5,425.1 Q383.0,421.50000000000006 387.0,424.50000000000006 Q383.5,426.70000000000005 378.5,425.1" fill="none" stroke="#1a1aa8" stroke-width="0.9"/><path d="M378.5,434.2 Q383.0,430.6 387.0,433.6 Q383.5,435.8 378.5,434.2" fill="none" stroke="#1a1aa8" stroke-width="0.9"/><path d="M409.5,415.6 C402.7,415.90000000000003 402.7,424.40000000000003 409.5,424.70000000000005 C402.7,425.00000000000006 402.7,433.50000000000006 409.5,433.80000000000007 C402.7,434.1 402.7,442.6 409.5,442.90000000000003 " fill="none" stroke="#1a1aa8" stroke-width="1"/><path d="M405.5,425.1 Q410.0,421.50000000000006 414.0,424.50000000000006 Q410.5,426.70000000000005 405.5,425.1" fill="none" stroke="#1a1aa8" stroke-width="0.9"/><path d="M405.5,434.2 Q410.0,430.6 414.0,433.6 Q410.5,435.8 405.5,434.2" fill="none" stroke="#1a1aa8" stroke-width="0.9"/><path d="M437.5,415.6 C430.7,415.90000000000003 430.7,424.40000000000003 437.5,424.70000000000005 C430.7,425.00000000000006 430.7,433.50000000000006 437.5,433.80000000000007 C430.7,434.1 430.7,442.6 437.5,442.90000000000003 " fill="none" stroke="#1a1aa8" stroke-width="1"/><path d="M433.5,425.1 Q438.0,421.50000000000006 442.0,424.50000000000006 Q438.5,426.70000000000005 433.5,425.1" fill="none" stroke="#1a1aa8" stroke-width="0.9"/><path d="M433.5,434.2 Q438.0,430.6 442.0,433.6 Q438.5,435.8 433.5,434.2" fill="none" stroke="#1a1aa8" stroke-width="0.9"/><path d="M465.5,415.6 C458.7,415.90000000000003 458.7,424.40000000000003 465.5,424.70000000000005 C458.7,425.00000000000006 458.7,433.50000000000006 465.5,433.80000000000007 C458.7,434.1 458.7,442.6 465.5,442.90000000000003 " fill="none" stroke="#1a1aa8" stroke-width="1"/><path d="M461.5,425.1 Q466.0,421.50000000000006 470.0,424.50000000000006 Q466.5,426.70000000000005 461.5,425.1" fill="none" stroke="#1a1aa8" stroke-width="0.9"/><path d="M461.5,434.2 Q466.0,430.6 470.0,433.6 Q466.5,435.8 461.5,434.2" fill="none" stroke="#1a1aa8" stroke-width="0.9"/><circle cx="329.2" cy="402.7" r="1.1" fill="none" stroke="#1a1aa8" stroke-width="0.8"/><circle cx="329.2" cy="447.5" r="1.1" fill="none" stroke="#1a1aa8" stroke-width="0.8"/><circle cx="384.8" cy="419.3" r="1.1" fill="none" stroke="#1a1aa8" stroke-width="0.8"/><circle cx="411.8" cy="419.3" r="1.1" fill="none" stroke="#1a1aa8" stroke-width="0.8"/><circle cx="439.8" cy="419.3" r="1.1" fill="none" stroke="#1a1aa8" stroke-width="0.8"/><circle cx="467.8" cy="419.3" r="1.1" fill="none" stroke="#1a1aa8" stroke-width="0.8"/><text x="321.5" y="330.2" font-size="8.4" font-weight="bold" fill="#0000e8" text-anchor="start" >LL1689-18mA</text><text x="321.5" y="339.84999999999997" font-size="8.4" font-weight="bold" fill="#0000e8" text-anchor="start" >18:1 (ALT R)</text><text x="321.5" y="349.5" font-size="8.4" font-weight="bold" fill="#0000e8" text-anchor="start" >5...110kHz @ dB (simulated)</text><text x="321.5" y="359.15" font-size="8.4" font-weight="bold" fill="#0000e8" text-anchor="start" >Use EML Board EE27 Alt-R</text><text x="321.5" y="368.8" font-size="8.4" font-weight="bold" fill="#0000e8" text-anchor="start" >Data by www.jacmusic.com</text><text x="213" y="371.3" font-size="8.4" font-weight="bold" fill="#0000e8" text-anchor="start" >Tube Ra =</text><text x="258.5" y="371.3" font-size="8.4" font-weight="bold" fill="#000" text-anchor="start" textLength="21" lengthAdjust="spacing">3500</text><text x="249.3" y="397.8" font-size="8.4" font-weight="bold" fill="#000" text-anchor="start" >R1</text><text x="186.8" y="422" font-size="8.4" font-weight="bold" fill="#000" text-anchor="start" >V1</text><text x="199" y="429.2" font-size="8.4" font-weight="bold" fill="#000" text-anchor="start" >SINE()</text><text x="199" y="438.8" font-size="8.4" font-weight="bold" fill="#000" text-anchor="start" >AC 22.6</text><text x="199" y="448.4" font-size="8.4" font-weight="bold" fill="#000" text-anchor="start" >Rser=0</text><text x="246.3" y="421" font-size="8.4" font-weight="bold" fill="#0000e8" text-anchor="start" >Replace R1 and V1</text><text x="246.3" y="431" font-size="8.4" font-weight="bold" fill="#0000e8" text-anchor="start" >by driver tube</text><text x="246.3" y="441" font-size="8.4" font-weight="bold" fill="#0000e8" text-anchor="start" >R1 is tube Ra</text><text x="338.5" y="407.8" font-size="8.4" font-weight="bold" fill="#000" text-anchor="start" >L1</text><text x="338.5" y="421.8" font-size="8.4" font-weight="bold" fill="#000" text-anchor="start" textLength="15.5" lengthAdjust="spacing">145</text><text x="338.5" y="452.3" font-size="8.4" font-weight="bold" fill="#000" text-anchor="start" >L2</text><text x="338.5" y="466.3" font-size="8.4" font-weight="bold" fill="#000" text-anchor="start" textLength="15.5" lengthAdjust="spacing">145</text><text x="374.5" y="423.6" font-size="8.4" font-weight="bold" fill="#000" text-anchor="end" >L3</text><text x="374.5" y="437.7" font-size="8.4" font-weight="bold" fill="#000" text-anchor="end" >1.8</text><text x="401.5" y="423.6" font-size="8.4" font-weight="bold" fill="#000" text-anchor="end" >L4</text><text x="401.5" y="437.7" font-size="8.4" font-weight="bold" fill="#000" text-anchor="end" >1.8</text><text x="429.5" y="423.6" font-size="8.4" font-weight="bold" fill="#000" text-anchor="end" >L5</text><text x="429.5" y="437.7" font-size="8.4" font-weight="bold" fill="#000" text-anchor="end" >1.8</text><text x="457.5" y="423.6" font-size="8.4" font-weight="bold" fill="#000" text-anchor="end" >L6</text><text x="457.5" y="437.7" font-size="8.4" font-weight="bold" fill="#000" text-anchor="end" >1.8</text><text x="510.5" y="426.7" font-size="8.4" font-weight="bold" fill="#000" text-anchor="start" >R2</text><text x="512.5" y="438.8" font-size="8.4" font-weight="bold" fill="#000" text-anchor="start" textLength="15" lengthAdjust="spacing">600</text><text transform="translate(363,471.5) rotate(-90)" font-size="8.4" font-weight="bold" fill="#000" textLength="85" lengthAdjust="spacing">K1L1L2L3L4L5L61</text><text x="321.5" y="506.8" font-size="8.4" font-weight="bold" fill="#000" text-anchor="start" textLength="86" lengthAdjust="spacing">.ac oct 100 5 300000</text><text x="538" y="385.6" font-size="8.4" font-weight="bold" fill="#0000e8" text-anchor="start" textLength="75.5" lengthAdjust="spacing" style="white-space:pre">&lt;==  Ri=40  Ohms</text><text x="538" y="404.5" font-size="8.4" font-weight="bold" fill="#0000e8" text-anchor="start" >Calculate Ri:</text><text x="538" y="414.5" font-size="8.4" font-weight="bold" fill="#0000e8" text-anchor="start" >Tube Ra divided by 81</text><text x="538" y="423.5" font-size="8.4" font-weight="bold" fill="#0000e8" text-anchor="start" style="white-space:pre"> with R2 in parallel</text>
<path d="M10.5,4.5 L20,4.5 L22.5,7 L22.5,17.5 L10.5,17.5 Z" fill="#fff" stroke="#000" stroke-width="1"/><path d="M20,4.5 L20,7 L22.5,7" fill="none" stroke="#000" stroke-width="0.8"/><path d="M13,7.5 L20,11.3 L13,15.2 Z" fill="#000"/><path d="M30.5,6.5 L34,6.5 L35,8 L41,8 L41,15.5 L30.5,15.5 Z" fill="#f4f47a" stroke="#606000" stroke-width="0.8"/><path d="M30.5,15.5 L33,10.5 L44,10.5 L41,15.5 Z" fill="#9c9c10" stroke="#404000" stroke-width="0.8"/><path d="M37,6 Q39,3 42,4.5" fill="none" stroke="#000" stroke-width="1.1"/><path d="M42,3 L44,6 L40.5,6.3 Z" fill="#000"/><rect x="55" y="4" width="13.5" height="13" fill="#000"/><rect x="56" y="5" width="11.5" height="11" fill="#a0a000"/><rect x="57.5" y="5" width="8.5" height="5" fill="#fff"/><rect x="57" y="12" width="9.5" height="4" fill="#000"/><rect x="63.5" y="13.5" width="1.5" height="1.5" fill="#fff"/><path d="M79.5,6 L81.5,5.5 L83,6.3 Q86.5,4 90.5,4.6 Q95,5.6 94.6,12 Q93,8.6 89.8,8.5 L84,9 L82.5,9.8 L81,9 L79.5,9.3 Z" fill="#fff" stroke="#000" stroke-width="0.9"/><path d="M86.3,9.3 L89.2,9.3 L89.2,13.8 L90,14.3 L90,17.8 L85,17.8 L85,14.3 L86.3,13.8 Z" fill="#0000c8"/><g stroke="#000" fill="none" stroke-linecap="round" stroke-linejoin="round"><path d="M115.5,5.5 L113,8.5 L111,11" stroke-width="2.4"/><path d="M111,11 L107.5,12.8 L104.5,14.5" stroke-width="1.3"/><path d="M111,11 L113.2,13.3 L111.8,17.3" stroke-width="1.3"/><path d="M113.8,8.3 L116,10.2 L117.8,10" stroke-width="1.1"/><path d="M112.8,7.6 L110.3,8.2 L109.5,9.8" stroke-width="1"/></g><path d="M114,3.2 L117.8,3 L117.5,5.8 L115,6.5 Z" fill="#000"/><rect x="115.6" y="4" width="1" height="1" fill="#fff"/><path d="M104.5,5.8 L107.5,4.5 M105.5,8.2 L108.3,6.8" stroke="#909090" stroke-width="0.9"/><path d="M128.5,17 L136,17 Q138,13 138,9 L138,6.5 Q137,5.5 136.2,6.5 L136,9 L136,4.5 Q135,3.5 134,4.5 L134,9 L134,3.8 Q133,3 132,3.8 L132,9 L132,4.5 Q131,3.8 130,4.8 L130,11 Q128.5,9 127,10 Q127,12 128.5,14 Z" fill="#f4f4f4" stroke="#a8a8a8" stroke-width="0.9"/><path d="M159.5,12.3 L164,16.8" stroke="#000" stroke-width="2.4" stroke-linecap="round"/><circle cx="156" cy="8.8" r="4.6" fill="#e8ffff" stroke="#000" stroke-width="1.4"/><path d="M153.5,8.8 L158.5,8.8 M156,6.3 L156,11.3" stroke="#000" stroke-width="1.3"/><path d="M152.5,7.5 Q153,5.5 155,5" stroke="#20c8e0" fill="none" stroke-width="1"/><path d="M179.5,12.3 L184,16.8" stroke="#acacac" stroke-width="2.4" stroke-linecap="round"/><circle cx="176" cy="8.8" r="4.6" fill="#f4f4f4" stroke="#acacac" stroke-width="1.4"/><path d="M199.5,12.3 L204,16.8" stroke="#000" stroke-width="2.4" stroke-linecap="round"/><circle cx="196" cy="8.8" r="4.6" fill="#e8ffff" stroke="#000" stroke-width="1.4"/><path d="M193.5,8.8 L198.5,8.8" stroke="#000" stroke-width="1.6"/><path d="M192.5,7.5 Q193,5.5 195,5" stroke="#20c8e0" fill="none" stroke-width="1"/><path d="M219.5,12.3 L224,16.8" stroke="#000" stroke-width="2.4" stroke-linecap="round"/><circle cx="216" cy="8.8" r="4.6" fill="#b8f0f8" stroke="#000" stroke-width="1.4"/><path d="M210.5,4 L222,14.5 M222.5,4 L211,14" stroke="#ff0000" stroke-width="1.2"/><path d="M237.5,4.5 L237.5,17.5 L251,17.5" fill="none" stroke="#000" stroke-width="1" stroke-dasharray="1,1"/><polyline points="238,8 241,5 244,7.5 247,4.5 250.5,7.5" fill="none" stroke="#2040e0" stroke-width="1.2"/><polyline points="238,11 241,9.5 244,11 247,10.5 250.5,12" fill="none" stroke="#e03030" stroke-width="1.2"/><polyline points="238,14.5 242,14.5 243,13 246,14.5 250.5,14.5" fill="none" stroke="#2040e0" stroke-width="1.2"/><path d="M257.5,4.5 L257.5,17.5 L270,17.5" fill="none" stroke="#c0c0c0" stroke-width="1" stroke-dasharray="1,1"/><path d="M262,6 Q268,6 268,11 Q268,16 262,16" fill="none" stroke="#b8b8b8" stroke-width="1"/><path d="M265,5 L265,17" stroke="#c8c8c8" stroke-width="1" stroke-dasharray="1,1"/><rect x="281.5" y="4.5" width="15" height="6" fill="#fff" stroke="#000080" stroke-width="1"/><rect x="281" y="4" width="16" height="2.5" fill="#000080"/><rect x="281.5" y="11.5" width="15" height="6" fill="#fff" stroke="#000080" stroke-width="1"/><rect x="281" y="11" width="16" height="2.5" fill="#000080"/><rect x="301.5" y="4.5" width="9" height="6" fill="#fff" stroke="#000080" stroke-width="1"/><rect x="301" y="4" width="10" height="2.5" fill="#000080"/><rect x="304.5" y="7.5" width="9" height="6" fill="#fff" stroke="#000080" stroke-width="1"/><rect x="304" y="7" width="10" height="2.5" fill="#000080"/><rect x="307.5" y="10.5" width="9" height="7" fill="#fff" stroke="#000080" stroke-width="1"/><rect x="307" y="10" width="10" height="2.5" fill="#000080"/><rect x="321.5" y="4.5" width="9" height="6" fill="#fff" stroke="#000080" stroke-width="1"/><rect x="321" y="4" width="10" height="2.5" fill="#000080"/><rect x="324.5" y="7.5" width="9" height="6" fill="#fff" stroke="#000080" stroke-width="1"/><rect x="324" y="7" width="10" height="2.5" fill="#000080"/><rect x="327.5" y="10.5" width="9" height="7" fill="#fff" stroke="#000080" stroke-width="1"/><rect x="327" y="10" width="10" height="2.5" fill="#000080"/><path d="M334,4 L337,7 M334,4 L334,6.5 M334,4 L336.5,4" stroke="#000" stroke-width="1"/><path d="M351.5,3.5 L356,12 M358,3.5 L353.5,12" stroke="#000" stroke-width="1.1"/><circle cx="352.5" cy="14.5" r="2.3" fill="none" stroke="#2020c0" stroke-width="1.2"/><circle cx="357.5" cy="14.5" r="2.3" fill="none" stroke="#2020c0" stroke-width="1.2"/><path d="M368.5,4.5 L373,4.5 L375.5,7 L375.5,13.5 L368.5,13.5 Z" fill="#fff" stroke="#000" stroke-width="1"/><path d="M369.5,7 L372,7 M369.5,9 L373,9 M369.5,11 L373,11" stroke="#000" stroke-width="0.9"/><path d="M374.5,7.5 L379,7.5 L381.5,10 L381.5,16.5 L374.5,16.5 Z" fill="#e8e8f0" stroke="#2020b0" stroke-width="1"/><rect x="376" y="10" width="3" height="5" fill="#a0a0a0"/><rect x="388.5" y="6.5" width="12" height="10" rx="1" fill="#b0b0b0" stroke="#a0a0a0"/><rect x="392" y="4.5" width="5" height="3" fill="#d0d0d0" stroke="#a0a0a0" stroke-width="0.8"/><rect x="394.5" y="11.5" width="8" height="6" fill="#e8e8e8" stroke="#a8a8a8" stroke-width="0.8"/><path d="M408,17 L408,11 L410,5 L413,5 L414,10 L416,10 L417,5 L420,5 L422,11 L422,17 L416.5,17 L416.5,13 L413.5,13 L413.5,17 Z" fill="#000"/><rect x="409.5" y="12" width="2" height="3" fill="#fff"/><rect x="418.5" y="12" width="2" height="3" fill="#fff"/><path d="M436.5,4.5 L445,4.5 L447,7.5 L436.5,7.5 Z" fill="#fff" stroke="#404040" stroke-width="0.9"/><rect x="433.5" y="8.5" width="15" height="7" rx="1.5" fill="#d8d8d8" stroke="#404040"/><rect x="435" y="15.5" width="12" height="2" fill="#b0b0b0" stroke="#404040" stroke-width="0.8"/><path d="M456.5,3.5 L467,3.5 L465,8.5 L454.5,8.5 Z" fill="#e0e0e0" stroke="#404040" stroke-width="0.9"/><rect x="453.5" y="8.5" width="14" height="8" rx="1" fill="#d0d0d0" stroke="#404040"/><rect x="455" y="11" width="11" height="1.2" fill="#707070"/><rect x="462" y="13" width="3" height="1.5" fill="#f0e000"/><path d="M480,15 L481,12 L489,4 L491.5,6.5 L483.5,14.5 Z" fill="#f0e000" stroke="#000" stroke-width="0.9"/><path d="M488.5,4.5 L490,3 L492.5,5.5 L491,7" fill="#ff2020" stroke="#000" stroke-width="0.6"/><rect x="479" y="17" width="15" height="1" fill="#2020ff"/><path d="M504.5,3.5 L504.5,10 M497.5,10.5 L511.5,10.5 L504.5,17.5 Z" fill="none" stroke="#000" stroke-width="1.2"/><rect x="518.5" y="4.5" width="14" height="8" fill="#f8f8a0" stroke="#000" stroke-width="1.2"/><path d="M525.5,12.5 L525.5,18 M523.5,11 L523.5,7 L527.5,7 L527.5,11" fill="none" stroke="#000" stroke-width="1"/><polyline points="545.5,3.5 545.5,5 551,8 540.5,13.3 545.5,15.8 545.5,18" fill="none" stroke="#000" stroke-width="1.1"/><path d="M565,3.5 L565,9 M559,9.5 L571,9.5 M559,12.5 L571,12.5 M565,13 L565,18" stroke="#000" stroke-width="1.4"/><path d="M583,4 Q588,4 587.5,7 Q587,9.5 585,10 Q588.5,10.5 588,13.5 Q587.5,16.8 583,17.5" fill="none" stroke="#000" stroke-width="1.2"/><path d="M606.5,3 L606.5,18 M599,6.5 L614,6.5 M600,6.5 L606.5,13 L613,6.5 M600,13.5 L613,13.5" fill="none" stroke="#000" stroke-width="1.2"/><path d="M617,7.5 L620,7.5 M617,13.5 L620,13.5 M620.5,5.5 L625,5.5 Q630,5.5 630,10.5 Q630,15.5 625,15.5 L620.5,15.5 Z M630,10.5 L634,10.5" fill="none" stroke="#000" stroke-width="1.3"/><path d="M640,9 Q641,5 643,7 L645,10 L644,4 Q645.5,2.5 647,4 L648,9 L648.5,4 Q650,3 651,4.5 L651,9 L652,6 Q653.5,5.5 653.5,7.5 L653,12 Q652,16 648,17.5 L644,17 Q642,15 640,11 Z" fill="#fff" stroke="#000" stroke-width="1.1"/><path d="M660,9 Q660,6 662,6.5 L662.5,5 Q664,3.5 665.5,5 L666.5,4.5 Q668.5,4 669,5.5 L670.5,6 Q672.5,6.5 672,8.5 L671.5,12 Q671,14 668.5,14.5 L668.5,16.5 L663,16.5 L663,14.5 Q660,13 660,9 Z" fill="#fff" stroke="#000" stroke-width="1.1"/><path d="M682,8 Q684,5 687,5 Q692,5.5 692,10.5 Q692,15.5 686.5,16" fill="none" stroke="#b0b0b0" stroke-width="1.6"/><path d="M680,5 L681,10.5 L685.5,8.5 Z" fill="#b0b0b0"/><path d="M710,8 Q708,5 705,5 Q700,5.5 700,10.5 Q700,15.5 705.5,16" fill="none" stroke="#b0b0b0" stroke-width="1.6"/><path d="M712,5 L711,10.5 L706.5,8.5 Z" fill="#b0b0b0"/><rect x="719" y="10" width="2" height="8" fill="#a4a4a4"/><rect x="719" y="10" width="5" height="1.3" fill="#a4a4a4"/><rect x="719" y="13.4" width="4" height="1.2" fill="#a4a4a4"/><rect x="719" y="16.8" width="5" height="1.2" fill="#a4a4a4"/><path d="M721,7.5 L723.5,4.5 L730.5,4.5 Q732,5 732,7.5 M729.5,7.5 L732,7.5 L732,5.5" fill="none" stroke="#b0b0b0" stroke-width="0.9"/><rect x="725.5" y="11" width="8.5" height="1.5" fill="#a8a8a8"/><rect x="725.5" y="11" width="1.5" height="4.5" fill="#a8a8a8"/><rect x="729" y="11" width="1.5" height="4.5" fill="#a8a8a8"/><rect x="732.5" y="11" width="1.5" height="4.5" fill="#a8a8a8"/><rect x="739" y="10" width="2" height="8" fill="#a4a4a4"/><rect x="739" y="10" width="5" height="1.3" fill="#a4a4a4"/><rect x="739" y="13.4" width="4" height="1.2" fill="#a4a4a4"/><rect x="739" y="16.8" width="5" height="1.2" fill="#a4a4a4"/><path d="M741,7.5 L743.5,4.5 L750.5,4.5 Q752,5 752,7.5 M749.5,7.5 L752,7.5 L752,5.5" fill="none" stroke="#b0b0b0" stroke-width="0.9"/><rect x="752.5" y="10" width="2" height="8" fill="#a4a4a4"/><rect x="749.5" y="10" width="5" height="1.3" fill="#a4a4a4"/><rect x="750.5" y="13.4" width="4" height="1.2" fill="#a4a4a4"/><rect x="749.5" y="16.8" width="5" height="1.2" fill="#a4a4a4"/><text x="758.5" y="17" font-family="Liberation Serif" font-style="italic" font-weight="bold" font-size="14" fill="#000">A</text><text x="767" y="17" font-family="Liberation Serif" font-style="italic" font-weight="bold" font-size="11" fill="#000">a</text><text x="780" y="15.3" font-size="12" fill="#000" stroke="#000" stroke-width="0.4" textLength="13" lengthAdjust="spacingAndGlyphs">.op</text><g stroke="#0000ff" fill="none" stroke-width="1.2"><path d="M6,31.5 L8,31.5 M8,28 L8,35 M8,30 L12,26 M8,33 L12,37"/></g><path d="M10,35.5 L13,38 L10.5,37.8 Z" fill="#0000ff"/><text x="18.8" y="34.2" font-size="8.8" fill="#000" stroke="#000" stroke-width="0.2" textLength="77" lengthAdjust="spacingAndGlyphs">LL1689-18mA-ALT-R.asc</text><g transform="translate(104,26)"><rect x="1" y="5" width="10" height="7" fill="#d0d0d0"/><rect x="3" y="10" width="6" height="3" fill="#202040"/><path d="M6,4 L6,7" stroke="#e02020" stroke-width="1.5"/><path d="M1,1 L3,1" stroke="#000" stroke-width="1"/></g><text x="119.2" y="35.2" font-size="8.8" fill="#000" stroke="#000" stroke-width="0.2" textLength="76.5" lengthAdjust="spacingAndGlyphs">LL1689-18mA-ALT-R.raw</text><path fill-rule="evenodd" fill="#ffff00" d="M108.5,19 L112.5,19 L126,61 L120,61 L120,100.5 L101,100.5 L101,61 L95,61 Z M110.5,30 L120,56 L115,56 L115,96 L106,96 L106,56 L101,56 Z"/><text x="71" y="125.6" font-size="16.6" fill="#ffff00" stroke="#ffff00" stroke-width="0.12" textLength="78.5" lengthAdjust="spacing">Click here</text>
</svg>
</div></body></html>
